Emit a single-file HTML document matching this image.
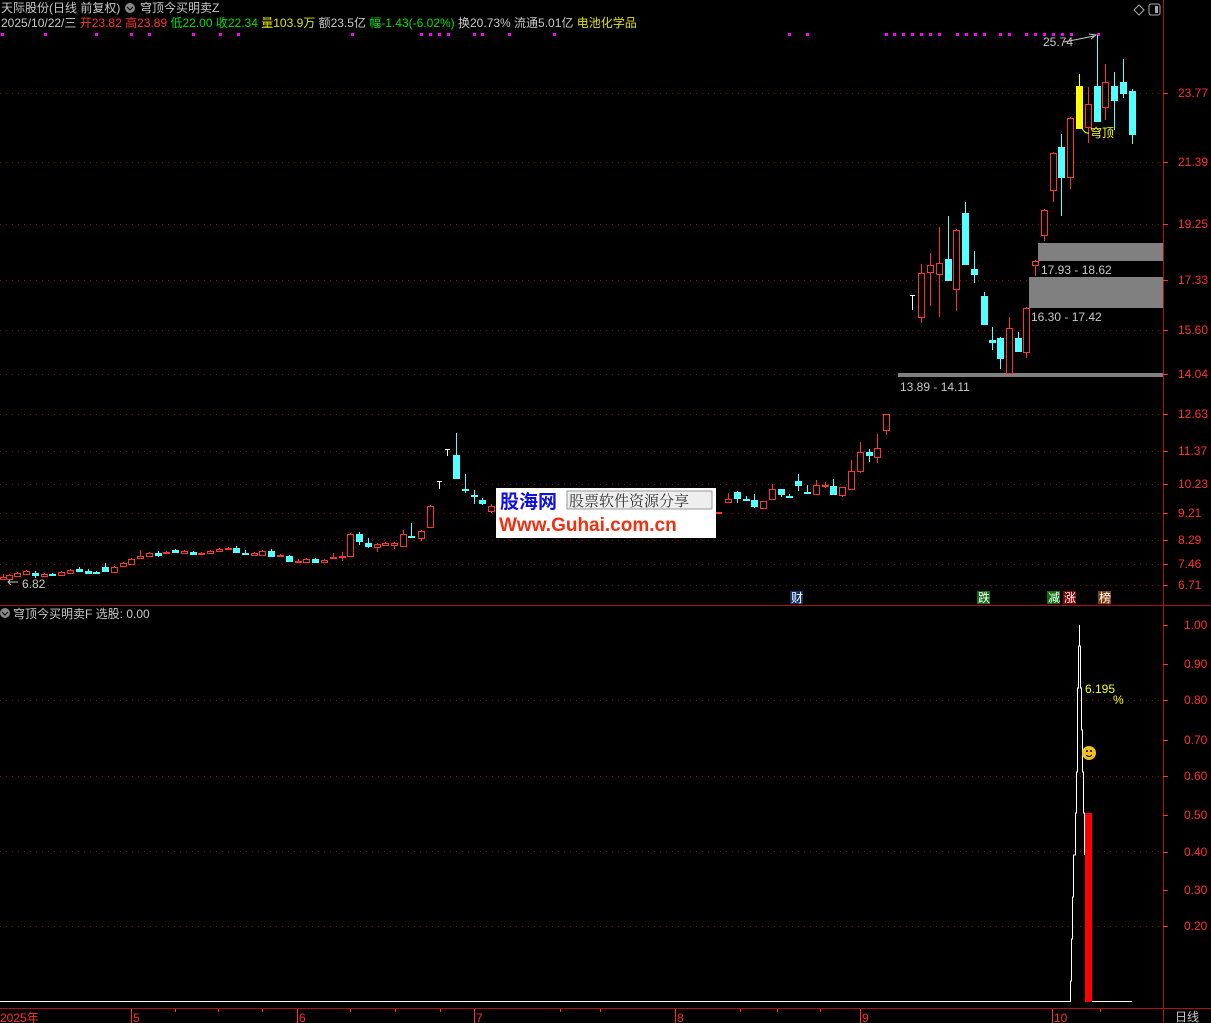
<!DOCTYPE html>
<html><head><meta charset="utf-8"><style>
html,body{margin:0;padding:0;background:#000;width:1211px;height:1023px;overflow:hidden}
svg{display:block}
text{font-family:"Liberation Sans","Noto Sans CJK SC",sans-serif;font-size:12px}
</style></head><body>
<svg id="s" width="1211" height="1023" xmlns="http://www.w3.org/2000/svg">
<rect width="1211" height="1023" fill="#000"/>
<g id="grid" stroke="#8a1010" stroke-dasharray="1,5" stroke-width="1"></g>
<g id="dots" fill="#ff00ff"></g>
<rect x="1038" y="243" width="125" height="18" fill="#808080"/>
<rect x="1029" y="277" width="134" height="31" fill="#808080"/>
<rect x="898" y="373" width="265" height="4" fill="#808080"/>
<g fill="#c8c8c8">
<text x="1041" y="274">17.93 - 18.62</text>
<text x="1031" y="321">16.30 - 17.42</text>
<text x="900" y="391">13.89 - 14.11</text>
<text x="1043" y="46">25.74</text>
<text x="22" y="588">6.82</text>
</g>
<path d="M1064 42 L1094 36 M1089 34 L1096 35 L1091 39" stroke="#c8c8c8" fill="none"/>
<path d="M18 582 L8 582 M11 579 L8 582 L11 585" stroke="#c8c8c8" fill="none"/>
<g id="c"></g>
<text x="1090" y="137" fill="#ffff00" font-size="12">穹顶</text>
<path d="M1082 128 q3 6 7 5" stroke="#ffff00" fill="none"/>
<rect x="496" y="488" width="220" height="50" fill="#fff"/>
<text x="500" y="508" fill="#1010e0" style="font-size:19px;font-weight:bold">股海网</text>
<rect x="567" y="491" width="145" height="18" fill="#eee" stroke="#999"/>
<text x="569" y="506" fill="#333" style="font-size:15px;font-family:'Noto Serif CJK SC',serif">股票软件资源分享</text>
<text x="499" y="531" fill="#f03010" style="font-size:19px;font-weight:bold">Www.Guhai.com.cn</text>
<rect x="790" y="591" width="13" height="13" fill="#10306a"/><text x="791" y="602" fill="#fff">财</text>
<rect x="977" y="591" width="13" height="13" fill="#107010"/><text x="978" y="602" fill="#fff">跌</text>
<rect x="1047" y="591" width="13" height="13" fill="#107010"/><text x="1048" y="602" fill="#fff">减</text>
<rect x="1063" y="591" width="13" height="13" fill="#800000"/><text x="1064" y="602" fill="#fff">涨</text>
<rect x="1098" y="591" width="13" height="13" fill="#804010"/><text x="1099" y="602" fill="#fff">榜</text>
<line x1="0" y1="605.5" x2="1211" y2="605.5" stroke="#b01010"/>
<line x1="1163.5" y1="0" x2="1163.5" y2="1023" stroke="#b01010"/>
<line x1="0" y1="1008.5" x2="1211" y2="1008.5" stroke="#b01010"/>
<g id="ax" fill="#ff3030"></g>
<text x="1" y="12" fill="#c8c8c8">天际股份(日线 前复权)</text>
<circle cx="130" cy="8" r="5" fill="#888"/><path d="M127 7 l3 3 l3 -3" stroke="#000" fill="none"/>
<text x="140" y="12" fill="#c8c8c8">穹顶今买明卖Z</text>
<text x="1" y="27" fill="#c8c8c8">2025/10/22/三 <tspan fill="#ff3030">开23.82 高23.89</tspan> <tspan fill="#00e000">低22.00 收22.34</tspan> <tspan fill="#e0e000">量103.9万</tspan> 额23.5亿 <tspan fill="#00e000">幅-1.43(-6.02%)</tspan> 换20.73% 流通5.01亿 <tspan fill="#e0e000">电池化学品</tspan></text>
<path d="M1134 10 l5 -5 l5 5 l-5 5z" stroke="#aaa" fill="none"/>
<rect x="1149" y="4" width="11" height="11" rx="2" stroke="#aaa" fill="none"/><rect x="1155" y="6" width="3" height="7" fill="#aaa"/>
<circle cx="5" cy="613" r="5" fill="#888"/><path d="M2 612 l3 3 l3 -3" stroke="#000" fill="none"/>
<text x="13" y="618" fill="#c8c8c8">穹顶今买明卖F  选股: 0.00</text>
<g shape-rendering="crispEdges">
<path d="M0 1001.5 H1070.5 V981 H1071.5 V939 H1072.5 V897 H1073.5 V855 H1075.5 V813 H1076.5 V772 H1077.5 V730 H1077.5 V688 H1078.5 V646 H1079.5 V625" stroke="#fff" fill="none"/>
<path d="M1079.5 625 V646 H1080.5 V688 H1081.5 V730 H1082.5 V772 H1083.5 V813 H1084.5 V855" stroke="#fff" fill="none"/>
<path d="M1092 1001.5 H1132" stroke="#fff"/>
</g>
<rect x="1085" y="813" width="7" height="189" fill="#ff0000"/>
<text x="1085" y="693" fill="#ffff00">6.195</text>
<text x="1113" y="704" fill="#ffff00">%</text>
<circle cx="1089" cy="753" r="7" fill="#f0c020"/><circle cx="1087" cy="751" r="1" fill="#000"/><circle cx="1091" cy="751" r="1" fill="#000"/><path d="M1086 755 q3 3 6 0" stroke="#000" fill="none"/>
<text x="0" y="1022" fill="#ff3030">2025年</text>
<text x="1175" y="1021" fill="#c8c8c8">日线</text>
</svg>
<script>
var NS="http://www.w3.org/2000/svg";
function el(p,t,a){var e=document.createElementNS(NS,t);for(var k in a)e.setAttribute(k,a[k]);p.appendChild(e);return e;}
var g=document.getElementById('grid');
var ty=[93,162,224,280,330,374,414,451,484,513,540,564,585,700,776,851,926];
ty.forEach(function(y){el(g,'line',{x1:0,y1:y+.5,x2:1163,y2:y+.5});});
var ax=document.getElementById('ax');
var pl=[[23.77,93],[21.39,162],[19.25,224],[17.33,280],[15.60,330],[14.04,374],[12.63,414],[11.37,451],[10.23,484],[9.21,513],[8.29,540],[7.46,564],[6.71,585]];
pl.forEach(function(p){el(ax,'text',{x:1178,y:p[1]+4}).textContent=p[0].toFixed(2);el(ax,'rect',{x:1163,y:p[1],width:5,height:1});});
var bl=["1.00",625,"0.90",664,"0.80",700,"0.70",740,"0.60",776,"0.50",815,"0.40",852,"0.30",890,"0.20",926];
for(var i=0;i<bl.length;i+=2){el(ax,'text',{x:1184,y:bl[i+1]+4}).textContent=bl[i];el(ax,'rect',{x:1163,y:bl[i+1],width:5,height:1});}
[[131,"5"],[297,"6"],[474,"7"],[675,"8"],[860,"9"],[1052,"10"]].forEach(function(m){el(ax,'rect',{x:m[0],y:1009,width:1,height:14});el(ax,'text',{x:m[0]+2,y:1022}).textContent=m[1];});
[175,218,262,350,395,440,560,600,740,777,820,1100].forEach(function(x){el(ax,'rect',{x:x,y:1009,width:1,height:3});});
var d=document.getElementById('dots');
[1,44,95,130,148,192,219,237,351,420,429,438,447,473,481,508,553,788,806,885,893,902,911,920,929,938,956,965,974,983,999,1008,1025,1034,1043,1052,1061,1070,1097].forEach(function(x){el(d,'rect',{x:x,y:33,width:3,height:3});});
var C=[
[3,577,579,574,580,'r'],[9,575,579,574,580,'r'],[17,573,576,572,577,'r'],[26,571,574,570,575,'r'],[35,573,575,571,578,'c'],[44,574,576,573,577,'r'],[52,574,575,573,576,'c'],[61,572,575,571,576,'r'],[70,570,573,569,574,'r'],[79,569,571,567,572,'c'],[88,571,573,569,574,'c'],[96,572,573,571,574,'c'],[105,567,571,563,572,'c'],[114,567,572,566,573,'r'],[123,563,566,562,567,'r'],[131,559,564,558,565,'r'],[140,556,558,550,559,'r'],[149,553,556,552,557,'r'],[158,553,555,551,557,'c'],[166,552,553,551,554,'r'],[175,550,552,549,553,'c'],[184,551,553,550,554,'r'],[193,552,554,551,555,'c'],[201,553,554,552,555,'r'],[210,551,553,550,554,'r'],[219,549,551,548,552,'r'],[228,548,549,547,550,'r'],[236,548,552,546,553,'c'],[245,553,554,550,555,'c'],[254,553,555,552,556,'r'],[262,551,555,550,556,'r'],[271,551,556,549,557,'c'],[280,555,556,554,557,'r'],[289,556,561,555,562,'c'],[298,561,562,559,563,'r'],[306,559,562,558,563,'r'],[315,559,562,558,563,'c'],[324,560,562,559,563,'r'],[333,557,558,553,559,'r'],[342,556,557,552,561,'r'],[350,534,556,533,557,'r'],[359,534,541,532,545,'c'],[368,543,546,538,548,'c'],[377,544,547,543,552,'r'],[385,543,545,542,546,'r'],[394,543,545,542,549,'r'],[403,534,546,530,547,'r'],[411,536,537,523,538,'c'],[421,531,538,530,541,'r'],[430,506,527,505,528,'r'],[439,481,483,481,489,'w'],[447,449,451,449,456,'w'],[456,455,478,433,479,'c'],[465,489,490,474,493,'c'],[474,495,496,490,504,'c'],[482,500,503,498,505,'c'],[491,506,511,504,513,'r'],
[718,512,513,512,514,'r'],[728,499,502,493,503,'r'],[737,492,498,491,503,'c'],[746,499,500,496,501,'c'],[754,500,506,494,508,'c'],[763,501,508,501,508,'r'],[772,489,499,484,500,'r'],[781,489,494,489,497,'c'],[789,496,497,494,498,'c'],[798,481,485,474,491,'c'],[807,492,493,485,494,'c'],[816,485,494,480,495,'r'],[825,485,486,482,488,'r'],[833,486,494,479,495,'c'],[842,487,495,487,497,'r'],[851,471,489,460,490,'r'],[860,452,471,442,473,'r'],[869,452,455,449,462,'c'],[877,448,457,434,463,'r'],[886,414,430,414,435,'r'],
[912,295,296,295,310,'w'],[921,273,317,264,323,'r'],[930,265,272,253,306,'r'],[939,263,274,227,317,'r'],[948,259,280,216,281,'c'],[956,230,289,229,311,'r'],[965,213,264,202,265,'c'],[974,269,274,251,283,'c'],[984,296,324,292,325,'c'],[992,340,342,327,350,'c'],[1000,338,358,337,369,'c'],[1009,328,373,317,374,'r'],[1018,338,351,332,352,'c'],[1026,308,352,307,358,'r'],[1035,261,265,260,276,'r'],[1044,210,235,209,241,'r'],[1053,153,190,152,202,'r'],[1061,147,177,134,216,'c'],[1070,118,177,117,189,'r'],[1079,86,128,74,129,'y'],[1088,104,127,87,143,'r'],[1097,86,121,35,122,'c'],[1105,82,107,64,120,'r'],[1114,86,100,72,130,'c'],[1123,82,93,59,98,'c'],[1132,91,134,89,144,'c']];
var cg=document.getElementById('c');
C.forEach(function(k){var x=k[0],t=k[5];var col=t=='r'?'#ff3232':t=='c'?'#54ffff':t=='y'?'#ffff00':'#ffffff';
if(t=='w'){el(cg,'line',{x1:x+.5,y1:k[3],x2:x+.5,y2:k[4],stroke:col});el(cg,'line',{x1:x-2,y1:k[1]+.5,x2:x+3,y2:k[1]+.5,stroke:col});return;}
el(cg,'line',{x1:x+.5,y1:k[3],x2:x+.5,y2:k[4],stroke:col});
var h=Math.max(1,k[2]-k[1]);
if(t=='r'){el(cg,'rect',{x:x-2.5,y:k[1]+.5,width:6,height:h,fill:'#000',stroke:col});}
else{el(cg,'rect',{x:x-3,y:k[1],width:7,height:h+1,fill:col});}});
</script>
</body></html>
